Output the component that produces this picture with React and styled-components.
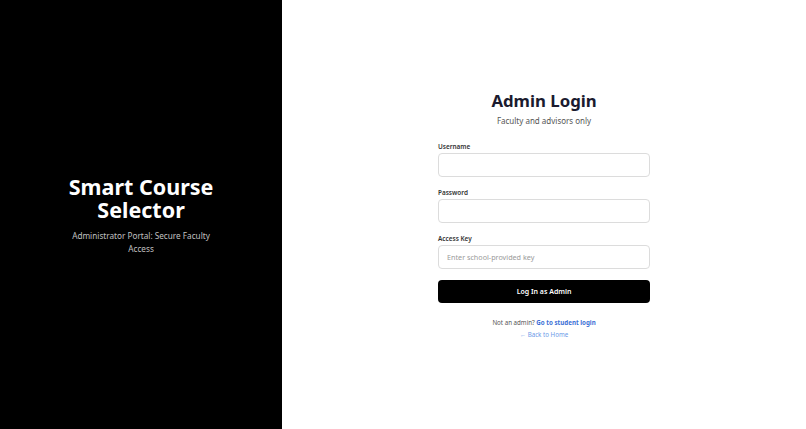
import React from 'react';
import styled, { createGlobalStyle } from 'styled-components';

const GlobalStyle = createGlobalStyle`
  html, body, #root {
    margin: 0;
    height: 100%;
  }
  body {
    font-family: 'Noto Sans', 'Open Sans', sans-serif;
  }
  * {
    box-sizing: border-box;
  }
`;

function App() {
  return (
    <>
      <GlobalStyle />
      <Page>
        <Side>
          <Brand>Smart Course Selector</Brand>
          <Tagline>Administrator Portal: Secure Faculty Access</Tagline>
        </Side>
        <Main>
          <Form onSubmit={(e) => e.preventDefault()}>
            <Title>Admin Login</Title>
            <Subtitle>Faculty and advisors only</Subtitle>
            <Field>
              <Label>Username</Label>
              <Input type="text" />
            </Field>
            <Field>
              <Label>Password</Label>
              <Input type="password" />
            </Field>
            <Field>
              <Label>Access Key</Label>
              <Input type="text" placeholder="Enter school-provided key" />
            </Field>
            <Button type="submit">Log In as Admin</Button>
            <Footer>
              <Note>
                Not an admin? <StrongLink href="#">Go to student login</StrongLink>
              </Note>
              <BackLink href="#">← Back to Home</BackLink>
            </Footer>
          </Form>
        </Main>
      </Page>
    </>
  );
}

export default App;

const Page = styled.div`
  display: flex;
  width: 100%;
  height: 100vh;
`;
const Side = styled.div`
  width: 35%;
  background: #000;
  color: #fff;
  display: flex;
  flex-direction: column;
  justify-content: center;
  align-items: center;
  text-align: center;
  padding: 0 50px;
`;
const Brand = styled.h1`
  margin: 0 0 8px;
  font-size: 21.5px;
  line-height: 23px;
  font-weight: 700;
`;
const Tagline = styled.p`
  margin: 0;
  font-size: 8.2px;
  line-height: 13px;
  color: #c0c0c0;
  max-width: 145px;
`;
const Main = styled.div`
  flex: 1;
  background: #fff;
  display: flex;
  justify-content: center;
  align-items: center;
`;
const Form = styled.form`
  width: 212px;
  display: flex;
  flex-direction: column;
`;
const Title = styled.h2`
  margin: 0;
  text-align: center;
  font-size: 16.8px;
  line-height: 22px;
  font-weight: 700;
  color: #1b1b2f;
`;
const Subtitle = styled.p`
  margin: 3px 0 15px;
  text-align: center;
  font-size: 8px;
  line-height: 12px;
  color: #555;
`;
const Field = styled.div`
  display: flex;
  flex-direction: column;
  margin-bottom: 11px;
`;
const Label = styled.label`
  font-size: 6.4px;
  line-height: 9px;
  font-weight: 600;
  color: #333;
  margin-bottom: 2px;
`;
const Input = styled.input`
  height: 24px;
  border: 1px solid #dcdcdc;
  border-radius: 4px;
  padding: 0 8px;
  font-family: inherit;
  font-size: 7.2px;
  outline: none;
  &::placeholder {
    color: #9a9a9a;
  }
`;
const Button = styled.button`
  height: 23px;
  border: 0;
  border-radius: 4px;
  background: #000;
  color: #fff;
  font-family: inherit;
  font-size: 7px;
  font-weight: 600;
  cursor: pointer;
`;
const Footer = styled.div`
  margin-top: 15px;
  display: flex;
  flex-direction: column;
  align-items: center;
  gap: 3px;
`;
const Note = styled.div`
  font-size: 6.2px;
  line-height: 9px;
  color: #555;
`;
const StrongLink = styled.a`
  color: #3b6fd6;
  font-weight: 700;
  text-decoration: none;
`;
const BackLink = styled.a`
  font-size: 6.2px;
  line-height: 9px;
  color: #6b9ae8;
  text-decoration: none;
`;
